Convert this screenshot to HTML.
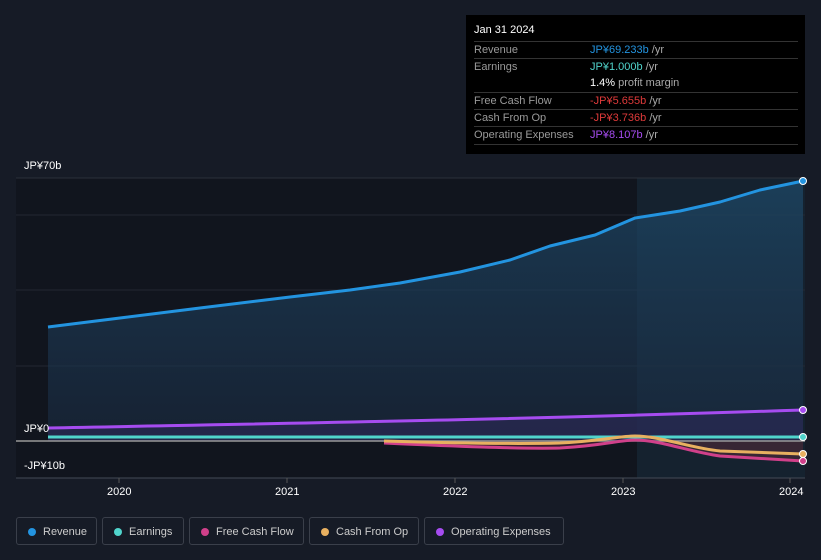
<!DOCTYPE html>
<html><head><style>
body{margin:0;width:821px;height:560px;background:#161b26;font-family:"Liberation Sans",sans-serif;position:relative;overflow:hidden}
.tt{position:absolute;left:466px;top:15px;width:339px;height:139px;background:#000;color:#fff;font-size:11px}
.tt .h{position:absolute;left:8px;top:9px;font-size:11px}
.row{position:absolute;left:8px;width:324px;border-top:1px solid #333;height:17px;line-height:17px}
.row span.l{color:#9a9a9a;display:inline-block;width:116px}
.u{color:#aaa}
.lab{position:absolute;color:#fff;font-size:11px}
.lg{position:absolute;top:517px;height:28px;border:1px solid #3a3f4a;border-radius:3px;color:#ccc;font-size:11px;line-height:28px;box-sizing:border-box;padding-left:26px}
.lg i{position:absolute;left:11px;top:10px;width:8px;height:8px;border-radius:50%}
</style></head><body>
<svg width="821" height="560" style="position:absolute;left:0;top:0">
<defs><linearGradient id="g" x1="0" y1="0" x2="0" y2="1"><stop offset="0" stop-color="#1e4a6a" stop-opacity=".7"/><stop offset="1" stop-color="#1a2a40" stop-opacity=".6"/></linearGradient></defs>
<rect x="16" y="178" width="621" height="300" fill="#11151e"/>
<rect x="637" y="178" width="168" height="300" fill="#15222f"/>
<line x1="16" y1="178" x2="805" y2="178" stroke="#2a303a"/>
<line x1="16" y1="215" x2="805" y2="215" stroke="#222833"/>
<line x1="16" y1="290" x2="805" y2="290" stroke="#222833"/>
<line x1="16" y1="366" x2="805" y2="366" stroke="#222833"/>
<path d="M48,327 L120,318 L200,308 L290,297 L350,290 L400,283 L460,272 L510,260 L550,246 L595,235 L635,218 L680,211 L720,202 L760,190 L803,181 L803,441 L48,441Z" fill="url(#g)"/>
<path d="M48,428 C300,423 500,420 803,410 L803,441 L48,441Z" fill="#2d2a5a" opacity=".6"/>
<path d="M384,441 L450,446 L560,448 L600,444 L635,440 L680,446 L720,456 L803,461 L803,441Z" fill="#5a2a3a" opacity=".5"/>
<line x1="16" y1="441" x2="805" y2="441" stroke="#999" stroke-width="1.5"/>
<line x1="16" y1="478" x2="805" y2="478" stroke="#444a55"/>
<g stroke="#555" ><line x1="119" y1="478" x2="119" y2="483"/><line x1="287" y1="478" x2="287" y2="483"/><line x1="455" y1="478" x2="455" y2="483"/><line x1="623" y1="478" x2="623" y2="483"/><line x1="790" y1="478" x2="790" y2="483"/></g>
<path d="M48,327 L120,318 L200,308 L290,297 L350,290 L400,283 L460,272 L510,260 L550,246 L595,235 L635,218 L680,211 L720,202 L760,190 L803,181" fill="none" stroke="#2394e0" stroke-width="3" stroke-linejoin="round"/>
<path d="M48,428 C300,423 500,420 803,410" fill="none" stroke="#a64cf0" stroke-width="3"/>
<path d="M48,437 L803,437" fill="none" stroke="#50d4cc" stroke-width="3"/>
<path d="M384,443 C450,446 520,449 560,448 C600,446 620,440 635,440 C660,440 690,452 720,456 L803,461" fill="none" stroke="#d0408a" stroke-width="3"/>
<path d="M384,441 C450,443 520,444 560,443 C600,441 620,436 635,436 C660,436 690,448 720,451 L803,454" fill="none" stroke="#e8b060" stroke-width="3"/>
<circle cx="803" cy="181" r="3.5" fill="#2394e0" stroke="#fff"/>
<circle cx="803" cy="410" r="3.5" fill="#a64cf0" stroke="#fff"/>
<circle cx="803" cy="437" r="3.5" fill="#50d4cc" stroke="#fff"/>
<circle cx="803" cy="454" r="3.5" fill="#e8b060" stroke="#fff"/>
<circle cx="803" cy="461" r="3.5" fill="#d0408a" stroke="#fff"/>
</svg>
<div class="lab" style="left:24px;top:160px">JP¥70b</div>
<div class="lab" style="left:24px;top:423px">JP¥0</div>
<div class="lab" style="left:24px;top:460px">-JP¥10b</div>
<div class="lab" style="left:107px;top:486px">2020</div>
<div class="lab" style="left:275px;top:486px">2021</div>
<div class="lab" style="left:443px;top:486px">2022</div>
<div class="lab" style="left:611px;top:486px">2023</div>
<div class="lab" style="left:779px;top:486px">2024</div>
<div class="tt">
<div class="h">Jan 31 2024</div>
<div class="row" style="top:26px"><span class="l">Revenue</span><b style="color:#2394e0;font-weight:normal">JP¥69.233b</b> <span class="u">/yr</span></div>
<div class="row" style="top:43px"><span class="l">Earnings</span><b style="color:#50d4cc;font-weight:normal">JP¥1.000b</b> <span class="u">/yr</span></div>
<div class="row" style="top:60px;border:0"><span class="l"></span>1.4% <span class="u">profit margin</span></div>
<div class="row" style="top:77px"><span class="l">Free Cash Flow</span><b style="color:#e03a3a;font-weight:normal">-JP¥5.655b</b> <span class="u">/yr</span></div>
<div class="row" style="top:94px"><span class="l">Cash From Op</span><b style="color:#e03a3a;font-weight:normal">-JP¥3.736b</b> <span class="u">/yr</span></div>
<div class="row" style="top:111px;border-bottom:1px solid #333"><span class="l">Operating Expenses</span><b style="color:#a64cf0;font-weight:normal">JP¥8.107b</b> <span class="u">/yr</span></div>
</div>
<div class="lg" style="left:16px;width:81px"><i style="background:#2394e0"></i>Revenue</div>
<div class="lg" style="left:102px;width:82px"><i style="background:#50d4cc"></i>Earnings</div>
<div class="lg" style="left:189px;width:115px"><i style="background:#d0408a"></i>Free Cash Flow</div>
<div class="lg" style="left:309px;width:110px"><i style="background:#e8b060"></i>Cash From Op</div>
<div class="lg" style="left:424px;width:140px"><i style="background:#a64cf0"></i>Operating Expenses</div>
</body></html>
